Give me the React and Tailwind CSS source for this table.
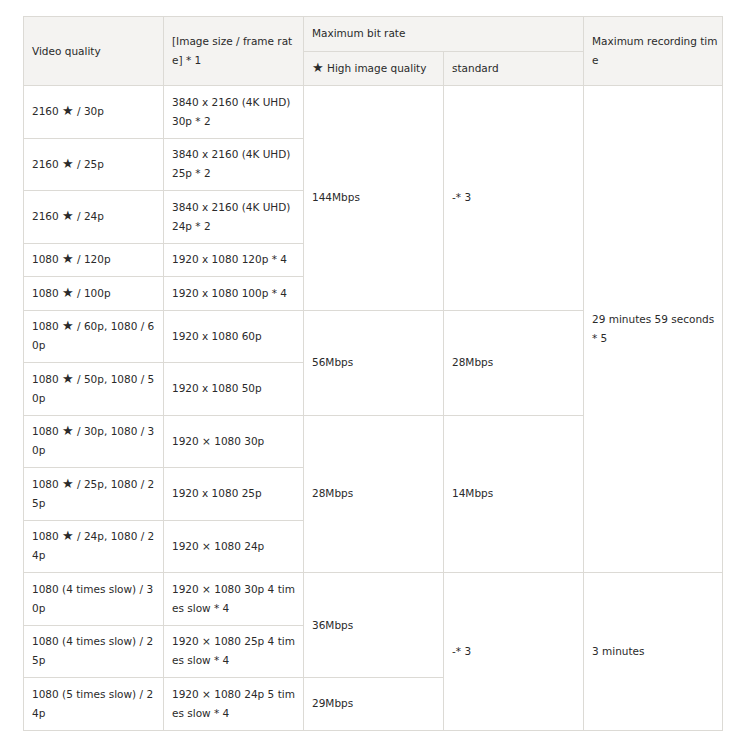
import React from 'react';

// Recording-time table: video quality vs. bit rate and max recording time
const base = 'border border-[#dcdad5] px-2 align-middle whitespace-nowrap';
const cell = `${base} py-[6.75px]`;
const head = `${base} py-[7.25px] bg-[#f4f3f1]`;

// the star glyph renders larger than the surrounding text in the reference
const withStar = (line) => {
    const parts = line.split('★');
    if (parts.length === 1) return line;
    return (
        <>
            {parts[0]}
            <span className="text-[13px] leading-[0]">★</span>
            {parts[1]}
        </>
    );
};

const Lines = ({ lines }) =>
    lines.map((line, i) => (
        <React.Fragment key={i}>
            {i > 0 && <br />}
            {withStar(line)}
        </React.Fragment>
    ));

const C = ({ t, ...rest }) => (
    <td className={cell} {...rest}>
        <Lines lines={Array.isArray(t) ? t : [t]} />
    </td>
);

const H = ({ t, ...rest }) => (
    <th className={`${head} text-left font-normal`} {...rest}>
        <Lines lines={Array.isArray(t) ? t : [t]} />
    </th>
);

const App = () => {
    return (
        <div className="w-[740px] min-h-[746px] bg-white pl-[23px] pt-4 font-['DejaVu_Sans',sans-serif] text-[10.5px] leading-[19px] text-[#2a2a2a]">
            <table className="w-[699px] table-fixed border-collapse border border-[#dcdad5]">
                <colgroup>
                    <col className="w-[140px]" />
                    <col className="w-[140px]" />
                    <col className="w-[140px]" />
                    <col className="w-[140px]" />
                    <col className="w-[139px]" />
                </colgroup>
                <thead>
                    <tr>
                        <H t="Video quality" rowSpan={2} />
                        <H t={['[Image size / frame rat', 'e] * 1']} rowSpan={2} />
                        <H t="Maximum bit rate" colSpan={2} />
                        <H t={['Maximum recording tim', 'e']} rowSpan={2} />
                    </tr>
                    <tr>
                        <H t="★ High image quality" />
                        <H t="standard" />
                    </tr>
                </thead>
                <tbody>
                    <tr>
                        <C t="2160 ★ / 30p" />
                        <C t={['3840 x 2160 (4K UHD)', '30p * 2']} />
                        <C t="144Mbps" rowSpan={5} />
                        <C t="-* 3" rowSpan={5} />
                        <C t={['29 minutes 59 seconds', '* 5']} rowSpan={10} />
                    </tr>
                    <tr>
                        <C t="2160 ★ / 25p" />
                        <C t={['3840 x 2160 (4K UHD)', '25p * 2']} />
                    </tr>
                    <tr>
                        <C t="2160 ★ / 24p" />
                        <C t={['3840 x 2160 (4K UHD)', '24p * 2']} />
                    </tr>
                    <tr>
                        <C t="1080 ★ / 120p" />
                        <C t="1920 x 1080 120p * 4" />
                    </tr>
                    <tr>
                        <C t="1080 ★ / 100p" />
                        <C t="1920 x 1080 100p * 4" />
                    </tr>
                    <tr>
                        <C t={['1080 ★ / 60p, 1080 / 6', '0p']} />
                        <C t="1920 x 1080 60p" />
                        <C t="56Mbps" rowSpan={2} />
                        <C t="28Mbps" rowSpan={2} />
                    </tr>
                    <tr>
                        <C t={['1080 ★ / 50p, 1080 / 5', '0p']} />
                        <C t="1920 x 1080 50p" />
                    </tr>
                    <tr>
                        <C t={['1080 ★ / 30p, 1080 / 3', '0p']} />
                        <C t="1920 × 1080 30p" />
                        <C t="28Mbps" rowSpan={3} />
                        <C t="14Mbps" rowSpan={3} />
                    </tr>
                    <tr>
                        <C t={['1080 ★ / 25p, 1080 / 2', '5p']} />
                        <C t="1920 x 1080 25p" />
                    </tr>
                    <tr>
                        <C t={['1080 ★ / 24p, 1080 / 2', '4p']} />
                        <C t="1920 × 1080 24p" />
                    </tr>
                    <tr>
                        <C t={['1080 (4 times slow) / 3', '0p']} />
                        <C t={['1920 × 1080 30p 4 tim', 'es slow * 4']} />
                        <C t="36Mbps" rowSpan={2} />
                        <C t="-* 3" rowSpan={3} />
                        <C t="3 minutes" rowSpan={3} />
                    </tr>
                    <tr>
                        <C t={['1080 (4 times slow) / 2', '5p']} />
                        <C t={['1920 × 1080 25p 4 tim', 'es slow * 4']} />
                    </tr>
                    <tr>
                        <C t={['1080 (5 times slow) / 2', '4p']} />
                        <C t={['1920 × 1080 24p 5 tim', 'es slow * 4']} />
                        <C t="29Mbps" />
                    </tr>
                </tbody>
            </table>
        </div>
    );
};

export default App;
